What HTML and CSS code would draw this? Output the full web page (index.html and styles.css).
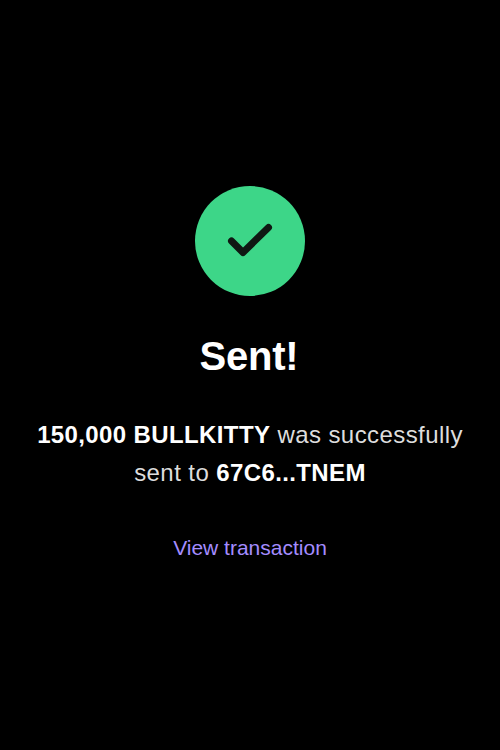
FILE: index.html
```html
<!DOCTYPE html>
<html lang="en">
<head>
<meta charset="utf-8">
<title>Sent</title>
<link rel="stylesheet" href="styles.css">
</head>
<body>
<main class="screen">
<div class="badge">
<svg class="check" viewBox="0 0 110 110" aria-hidden="true"><path d="M36.5 55L48 66.5L73.5 41.5"/></svg>
</div>
<h1 class="title">Sent!</h1>
<p class="message"><strong>150,000 BULLKITTY</strong> was successfully<br>sent to <strong>67C6...TNEM</strong></p>
<a class="link" href="#">View transaction</a>
</main>
</body>
</html>
```
FILE: styles.css
```css
body {
  margin: 0;
  background: #000;
  font-family: "Liberation Sans", Arial, sans-serif;
}
.screen {
  box-sizing: border-box;
  height: 750px;
  padding-top: 186px;
  display: flex;
  flex-direction: column;
  align-items: center;
  text-align: center;
}
.badge {
  width: 110px;
  height: 110px;
  border-radius: 50%;
  background: #3dd688;
}
.check {
  display: block;
  fill: none;
  stroke: #0f1813;
  stroke-width: 7;
  stroke-linecap: round;
  stroke-linejoin: round;
}
.title {
  margin: 36px 2px 0 0;
  font-size: 40px;
  line-height: 48px;
  letter-spacing: -0.2px;
  color: #fff;
}
.message {
  margin: 36px 0 0;
  font-size: 24px;
  line-height: 38px;
  letter-spacing: 0.42px;
  color: #ddd;
  white-space: nowrap;
}
.message strong {
  letter-spacing: 0.38px;
  color: #fff;
}
.link {
  margin-top: 44px;
  font-size: 21px;
  line-height: 24px;
  color: #a48cff;
  text-decoration: none;
}
```
